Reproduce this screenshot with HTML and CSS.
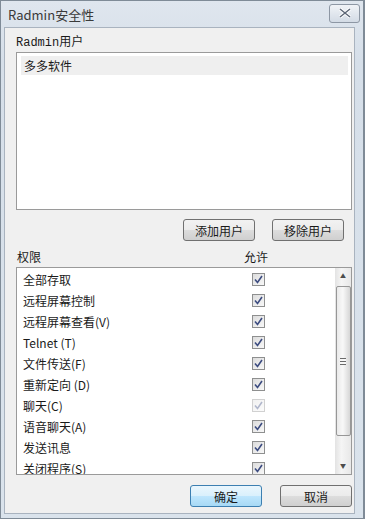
FILE: index.html
```html
<!DOCTYPE html>
<html lang="zh-CN">
<head>
    <meta charset="UTF-8">
    <meta name="viewport" content="width=device-width, initial-scale=1.0">
    <title>Radmin安全性</title>
    <link rel="stylesheet" href="styles.css">
</head>
<body>
    <div class="window">
        <div class="titlebar">
            <span class="title">Radmin安全性</span>
            <div class="close">
                <svg width="14" height="10" viewBox="0 0 14 10"><path d="M2 1 L12 9 M12 1 L2 9" stroke="#fff" stroke-width="3.2"/><path d="M2 1 L12 9 M12 1 L2 9" stroke="#5d6777" stroke-width="1.5"/></svg>
            </div>
        </div>
        <div class="content">
            <div class="label mono">Radmin用户</div>
            <div class="userlist">
                <div class="useritem">多多软件</div>
            </div>
            <div class="userbtns">
                <button class="btn">添加用户</button>
                <button class="btn">移除用户</button>
            </div>
            <div class="permhead">
                <span>权限</span>
                <span class="allow">允许</span>
            </div>
            <div class="permbox">
                <div class="permrows" id="rows"></div>
                <div class="scrollbar">
                    <div class="arrow up">&#9650;</div>
                    <div class="thumb"><div class="grip"></div></div>
                    <div class="arrow down">&#9660;</div>
                </div>
            </div>
            <div class="footer">
                <button class="btn default">确定</button>
                <button class="btn">取消</button>
            </div>
        </div>
    </div>

<script>
    const perms = [
        ['全部存取', false],
        ['远程屏幕控制', false],
        ['远程屏幕查看(V)', false],
        ['Telnet (T)', false],
        ['文件传送(F)', false],
        ['重新定向 (D)', false],
        ['聊天(C)', true],
        ['语音聊天(A)', false],
        ['发送讯息', false],
        ['关闭程序(S)', false]
    ];

    const rows = document.getElementById('rows');
    perms.forEach(p => {
        const row = document.createElement('div');
        row.className = 'permrow';
        row.innerHTML = `
            <span class="pname">${p[0]}</span>
            <span class="check${p[1] ? ' dim' : ''}">
                <svg width="9" height="9" viewBox="0 0 9 9"><path d="M1 4.5 L3.5 7.5 L8 1" fill="none" stroke="#3c4c80" stroke-width="1.6"/></svg>
            </span>
        `;
        rows.appendChild(row);
    });
</script>
</body>
</html>
```

FILE: styles.css
```css
body {
    margin: 0;
    font-family: "Noto Sans CJK SC", "Liberation Sans", sans-serif;
    font-size: 12px;
    color: #1a1a1a;
    background-color: #c9d6e3;
}
.window {
    width: 365px;
    height: 519px;
    box-sizing: border-box;
    border: 1px solid #7f8b97;
    border-right-width: 2px;
    background: linear-gradient(#dfe6ee, #d6dfe9 60px, #dae3ec);
    display: flex;
    flex-direction: column;
    padding: 0 8px 4px 3px;
}
.titlebar {
    height: 26px;
    display: flex;
    align-items: center;
    justify-content: space-between;
    margin-right: -5px;
}
.title {
    font-size: 13px;
    color: #3a3a3a;
    padding-left: 4px;
}
.close {
    width: 29px;
    height: 17px;
    border: 1px solid #8d97a4;
    border-radius: 3px;
    background: linear-gradient(#f0f3f7, #d3dbe5);
    display: flex;
    align-items: center;
    justify-content: center;
    margin-top: -2px;
}
.content {
    flex: 1;
    background-color: #f0f0f0;
    border: 1px solid #a9b3bf;
    padding: 0 2px 0 11px;
    display: flex;
    flex-direction: column;
}
.mono {
    font-family: "Liberation Mono", "Noto Sans CJK SC", monospace;
}
.label {
    height: 24px;
    line-height: 30px;
}
.userlist {
    height: 153px;
    background-color: white;
    border: 1px solid #9a9a9a;
    padding: 3px 3px 0 4px;
}
.useritem {
    height: 19px;
    line-height: 19px;
    padding-left: 3px;
    background-color: #efefef;
    font-size: 12px;
}
.userbtns {
    display: flex;
    justify-content: flex-end;
    gap: 17px;
    padding: 9px 8px 0 0;
}
.btn {
    width: 72px;
    height: 22px;
    padding: 0;
    font-family: "Noto Sans CJK SC", sans-serif;
    font-size: 12px;
    color: #1a1a1a;
    border: 1px solid #707070;
    border-radius: 3px;
    background: linear-gradient(#f2f2f2 0%, #ebebeb 50%, #dddddd 51%, #cfcfcf 100%);
}
.btn.default {
    border-color: #3c7fb1;
    background: linear-gradient(#eaf6fd 0%, #d9f0fc 50%, #bee6fd 51%, #a7d9f5 100%);
}
.permhead {
    display: flex;
    height: 26px;
    line-height: 31px;
    padding-left: 1px;
}
.allow {
    margin-left: 203px;
}
.permbox {
    height: 206px;
    background-color: white;
    border: 1px solid #9a9a9a;
    display: flex;
    overflow: hidden;
}
.permrows {
    flex: 1;
    padding: 1px 0 0 6px;
}
.permrow {
    height: 21px;
    display: flex;
    align-items: center;
}
.pname {
    width: 229px;
}
.check {
    width: 11px;
    height: 11px;
    border: 1px solid #8e8f8f;
    background: linear-gradient(135deg, #dcdcdc, #f8f8f8);
    display: flex;
    align-items: center;
    justify-content: center;
}
.check.dim {
    opacity: 0.4;
}
.scrollbar {
    width: 16px;
    background: linear-gradient(90deg, #e3e3e3, #f5f5f5 40%, #e8e8e8);
    display: flex;
    flex-direction: column;
    align-items: center;
}
.arrow {
    height: 16px;
    font-size: 6px;
    line-height: 16px;
    color: #4d4d4d;
}
.thumb {
    width: 13px;
    height: 148px;
    margin-top: 2px;
    border: 1px solid #979797;
    border-radius: 2px;
    background: linear-gradient(90deg, #eaeaea, #f8f8f8 45%, #d6d6d6);
    display: flex;
    align-items: center;
    justify-content: center;
}
.grip {
    width: 6px;
    height: 5px;
    border-top: 1px solid #6b6b6b;
    border-bottom: 1px solid #6b6b6b;
    background: linear-gradient(#f8f8f8 40%, #6b6b6b 40%, #6b6b6b 60%, #f8f8f8 60%);
}
.down {
    margin-top: auto;
}
.footer {
    display: flex;
    justify-content: flex-end;
    gap: 18px;
    padding: 10px 0 0 0;
}
```
